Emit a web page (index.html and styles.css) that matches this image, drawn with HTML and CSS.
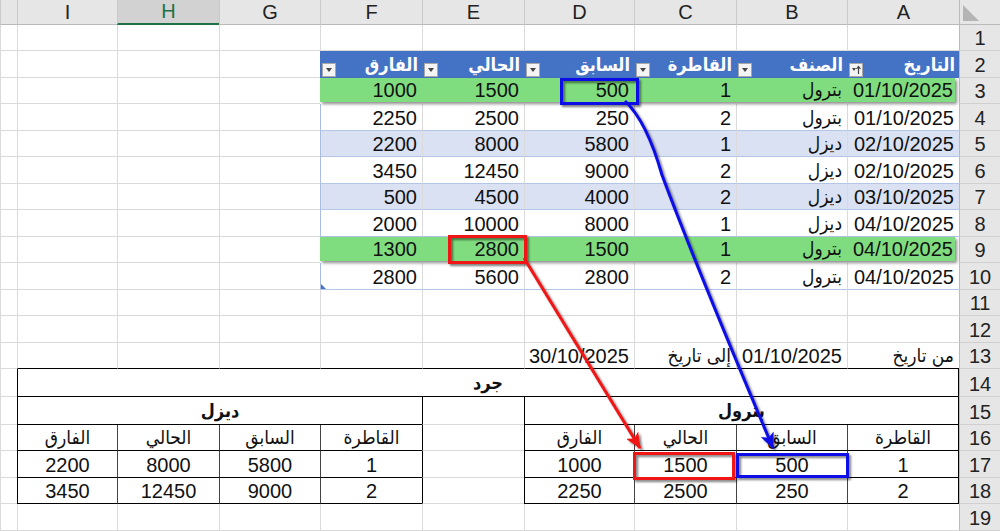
FILE: index.html
```html
<!DOCTYPE html>
<html lang="ar" dir="rtl">
<head>
    <meta charset="UTF-8">
    <title>جرد</title>
    <link rel="stylesheet" href="styles.css">
</head>
<body>
    <div class="sheet">
        <div class="row hdr">
            <div class="corner"><svg width="16" height="16" viewBox="0 0 16 16"><path d="M0 0V16H16Z" fill="#b4b4b4"/></svg></div>
            <div class="ch">A</div><div class="ch">B</div><div class="ch">C</div><div class="ch">D</div><div class="ch">E</div>
            <div class="ch">F</div><div class="ch">G</div><div class="ch sel">H</div><div class="ch">I</div><div class="ch"></div>
        </div>

        <div class="row r1">
            <div class="rh">1</div>
            <div class="c"></div><div class="c"></div><div class="c"></div><div class="c"></div><div class="c"></div>
            <div class="c"></div><div class="c"></div><div class="c"></div><div class="c"></div><div class="c"></div>
        </div>

        <div class="row">
            <div class="rh">2</div>
            <div class="th"><span class="ar">التاريخ</span><span class="fb sort"><svg width="10" height="10" viewBox="0 0 10 10"><path d="M1 3h4L3 6z" fill="#444"/><path d="M7.5 9V2M5.5 4l2-2.5 2 2.5" stroke="#444" stroke-width="1.2" fill="none"/></svg></span></div>
            <div class="th"><span class="ar">الصنف</span><span class="fb"></span></div>
            <div class="th"><span class="ar">القاطرة</span><span class="fb"></span></div>
            <div class="th"><span class="ar">السابق</span><span class="fb"></span></div>
            <div class="th"><span class="ar">الحالي</span><span class="fb"></span></div>
            <div class="th"><span class="ar">الفارق</span><span class="fb"></span></div>
            <div class="c"></div><div class="c"></div><div class="c"></div><div class="c"></div>
        </div>

        <div class="row hl">
            <div class="rh">3</div>
            <div class="band">
                <div class="bc">01/10/2025</div><div class="bc ar">بترول</div><div class="bc">1</div>
                <div class="bc">500</div><div class="bc">1500</div><div class="bc">1000</div>
            </div>
            <div class="c"></div><div class="c"></div><div class="c"></div><div class="c"></div>
        </div>

        <div class="row">
            <div class="rh">4</div>
            <div class="tc">01/10/2025</div><div class="tc ar">بترول</div><div class="tc">2</div>
            <div class="tc">250</div><div class="tc">2500</div><div class="tc edge">2250</div>
            <div class="c"></div><div class="c"></div><div class="c"></div><div class="c"></div>
        </div>

        <div class="row">
            <div class="rh">5</div>
            <div class="tc bd">02/10/2025</div><div class="tc bd ar">ديزل</div><div class="tc bd">1</div>
            <div class="tc bd">5800</div><div class="tc bd">8000</div><div class="tc bd edge">2200</div>
            <div class="c"></div><div class="c"></div><div class="c"></div><div class="c"></div>
        </div>

        <div class="row">
            <div class="rh">6</div>
            <div class="tc">02/10/2025</div><div class="tc ar">ديزل</div><div class="tc">2</div>
            <div class="tc">9000</div><div class="tc">12450</div><div class="tc edge">3450</div>
            <div class="c"></div><div class="c"></div><div class="c"></div><div class="c"></div>
        </div>

        <div class="row">
            <div class="rh">7</div>
            <div class="tc bd">03/10/2025</div><div class="tc bd ar">ديزل</div><div class="tc bd">2</div>
            <div class="tc bd">4000</div><div class="tc bd">4500</div><div class="tc bd edge">500</div>
            <div class="c"></div><div class="c"></div><div class="c"></div><div class="c"></div>
        </div>

        <div class="row">
            <div class="rh">8</div>
            <div class="tc">04/10/2025</div><div class="tc ar">ديزل</div><div class="tc">1</div>
            <div class="tc">8000</div><div class="tc">10000</div><div class="tc edge">2000</div>
            <div class="c"></div><div class="c"></div><div class="c"></div><div class="c"></div>
        </div>

        <div class="row hl">
            <div class="rh">9</div>
            <div class="band">
                <div class="bc">04/10/2025</div><div class="bc ar">بترول</div><div class="bc">1</div>
                <div class="bc">1500</div><div class="bc">2800</div><div class="bc">1300</div>
            </div>
            <div class="c"></div><div class="c"></div><div class="c"></div><div class="c"></div>
        </div>

        <div class="row">
            <div class="rh">10</div>
            <div class="tc">04/10/2025</div><div class="tc ar">بترول</div><div class="tc">2</div>
            <div class="tc">2800</div><div class="tc">5600</div><div class="tc edge">2800</div>
            <div class="c"></div><div class="c"></div><div class="c"></div><div class="c"></div>
        </div>

        <div class="row">
            <div class="rh">11</div>
            <div class="c"></div><div class="c"></div><div class="c"></div><div class="c"></div><div class="c"></div>
            <div class="c"></div><div class="c"></div><div class="c"></div><div class="c"></div><div class="c"></div>
        </div>

        <div class="row">
            <div class="rh">12</div>
            <div class="c"></div><div class="c"></div><div class="c"></div><div class="c"></div><div class="c"></div>
            <div class="c"></div><div class="c"></div><div class="c"></div><div class="c"></div><div class="c"></div>
        </div>

        <div class="row">
            <div class="rh">13</div>
            <div class="c bb ar">من تاريخ</div><div class="c bb">01/10/2025</div><div class="c bb ar">إلى تاريخ</div>
            <div class="c bb">30/10/2025</div><div class="c bb"></div><div class="c bb"></div>
            <div class="c bb"></div><div class="c bb"></div><div class="c bb"></div><div class="c"></div>
        </div>

        <div class="row r14">
            <div class="rh">14</div>
            <div class="box ar">جرد</div>
            <div class="c"></div>
        </div>

        <div class="row r15">
            <div class="rh">15</div>
            <div class="blk r ar">بترول</div>
            <div class="c eb"></div>
            <div class="blk ar">ديزل</div>
            <div class="c"></div>
        </div>

        <div class="row">
            <div class="rh">16</div>
            <div class="t ar right">القاطرة</div><div class="t ar">السابق</div><div class="t ar">الحالي</div><div class="t ar ol">الفارق</div>
            <div class="c eb"></div>
            <div class="t ar">القاطرة</div><div class="t ar">السابق</div><div class="t ar">الحالي</div><div class="t ar ol">الفارق</div>
            <div class="c"></div>
        </div>

        <div class="row">
            <div class="rh">17</div>
            <div class="t right">1</div><div class="t">500</div><div class="t">1500</div><div class="t ol">1000</div>
            <div class="c eb"></div>
            <div class="t">1</div><div class="t">5800</div><div class="t">8000</div><div class="t ol">2200</div>
            <div class="c"></div>
        </div>

        <div class="row">
            <div class="rh">18</div>
            <div class="t right">2</div><div class="t">250</div><div class="t">2500</div><div class="t ol">2250</div>
            <div class="c eb"></div>
            <div class="t">2</div><div class="t">9000</div><div class="t">12450</div><div class="t ol">3450</div>
            <div class="c"></div>
        </div>

        <div class="row">
            <div class="rh">19</div>
            <div class="c"></div><div class="c"></div><div class="c"></div><div class="c"></div><div class="c"></div>
            <div class="c"></div><div class="c"></div><div class="c"></div><div class="c"></div><div class="c"></div>
        </div>
    </div>

    <!-- drawing layer: boxes and arrows sitting over the cells -->
    <svg class="ink" width="1000" height="531" viewBox="0 0 1000 531">
        <defs>
            <filter id="sh" filterUnits="userSpaceOnUse" x="0" y="0" width="1000" height="531">
                <feDropShadow dx="2" dy="2" stdDeviation="1.3" flood-color="#000" flood-opacity="0.5"/>
            </filter>
            <marker id="ab" markerUnits="userSpaceOnUse" markerWidth="16" markerHeight="14" viewBox="0 0 16 14" refX="15" refY="7" orient="auto">
                <path d="M0 0L16 7L0 14L4 7Z" fill="#0b0be8"/>
            </marker>
            <marker id="ar" markerUnits="userSpaceOnUse" markerWidth="16" markerHeight="14" viewBox="0 0 16 14" refX="15" refY="7" orient="auto">
                <path d="M0 0L16 7L0 14L4 7Z" fill="#f01414"/>
            </marker>
        </defs>
        <path d="M321 284V289H326Z" fill="#4472c4"/>
        <g filter="url(#sh)" fill="none" stroke-width="3">
            <rect x="561.5" y="79.5" width="76" height="24" stroke="#0b0be8"/>
            <rect x="449.5" y="236.5" width="76" height="26" stroke="#f01414"/>
            <rect x="634.5" y="453.5" width="99" height="25" stroke="#f01414"/>
            <rect x="737.5" y="454.5" width="110" height="22" stroke="#0b0be8"/>
            <path d="M625 101C640 115 652 140 662 175C690 250 740 370 773 448" stroke="#0b0be8" marker-end="url(#ab)"/>
            <path d="M524 258L640 448" stroke="#f01414" marker-end="url(#ar)"/>
        </g>
    </svg>
</body>
</html>
```

FILE: styles.css
```css
body {
    margin: 0;
    width: 1000px;
    height: 531px;
    overflow: hidden;
    position: relative;
    background-color: #fff;
    font-family: "Liberation Sans", "DejaVu Sans Condensed", "DejaVu Sans", Arial, sans-serif;
    font-size: 20px;
    color: #111;
}

.sheet {
    direction: rtl;
}

.row {
    display: grid;
    grid-template-columns: 41px 112px 111px 102px 110px 102px 102px 101px 102px 100px 1fr;
    height: 26.5px;
}
.row.hdr { height: 25px; }
.row.r1 { height: 26px; }
.row.r14 { height: 27.7px; }
.row.r15 { height: 28.3px; }

.row.hl {
    position: relative;
    z-index: 1;
}

.c, .rh, .ch, .th, .tc, .bc, .t, .box, .blk, .corner {
    box-sizing: border-box;
    display: flex;
    align-items: flex-end;
    white-space: nowrap;
    min-width: 0;
}

/* arabic runs come from a wider fallback font, so set them a bit smaller */
.ar {
    font-size: 19px;
}
.th .ar, .box.ar, .blk.ar {
    font-size: 18px;
}

/* plain cells */
.c {
    padding: 0 5px;
    border-left: 1px solid #dadada;
    border-bottom: 1px solid #dadada;
}
.c.bb { border-bottom-color: #000; }
.c.eb { border-left-color: #000; }

/* headers */
.corner {
    justify-content: flex-end;
    padding: 0 0 3px 3px;
    background-color: #e6e6e6;
    border-left: 1px solid #bababa;
    border-bottom: 1px solid #bababa;
}
.ch {
    justify-content: center;
    background-color: #e6e6e6;
    border-left: 1px solid #cacaca;
    border-bottom: 1px solid #bababa;
    color: #222;
}
.ch.sel {
    background-color: #d2d2d2;
    color: #1e7145;
    border-bottom: 2px solid #1e7145;
}
.rh {
    justify-content: center;
    background-color: #e6e6e6;
    border-left: 1px solid #bababa;
    border-bottom: 1px solid #d0d0d0;
    color: #222;
}

/* excel table */
.th {
    justify-content: space-between;
    padding: 0 4px 1px 2px;
    background-color: #4472c4;
    color: #fff;
    font-weight: bold;
}
.th .ar {
    padding-bottom: 1px;
}
.fb {
    box-sizing: border-box;
    display: flex;
    align-items: center;
    justify-content: center;
    width: 14px;
    height: 14px;
    background-color: #f4f4f4;
    border: 1px solid #a8a8a8;
}
.fb::after {
    content: "";
    border-top: 4px solid #444;
    border-left: 3.5px solid transparent;
    border-right: 3.5px solid transparent;
}
.fb.sort::after { display: none; }

.tc {
    padding: 0 5px;
    border-left: 1px solid #dadada;
    border-bottom: 1px solid #b4c6e7;
}
.tc.bd { background-color: #d9e1f2; }
.tc.edge { border-left-color: #a9bde3; }

.band {
    grid-column: span 6;
    display: grid;
    grid-template-columns: 108px 111px 102px 110px 102px 102px;
    margin: 0 4px 2px 0;
    background-color: #80dd7f;
    box-shadow: 2px 2px 3px rgba(0, 0, 0, 0.45);
}
.bc { padding: 0 5px; }
.bc:first-child { padding-right: 2px; }

.ar.tc, .ar.bc, .ar.c {
    padding-bottom: 1px;
}

/* summary block */
.box {
    grid-column: span 9;
    justify-content: center;
    font-weight: bold;
    border: 1px solid #000;
    border-top: none;
    padding-bottom: 2px;
}
.blk {
    grid-column: span 4;
    justify-content: center;
    font-weight: bold;
    border-left: 1px solid #000;
    border-bottom: 1px solid #000;
    padding-bottom: 2px;
}
.blk.r { border-right: 1px solid #000; }

.t {
    justify-content: center;
    border-left: 1px solid #444;
    border-bottom: 1px solid #000;
}
.t.ar { padding-bottom: 1px; }
.t.ol { border-left-color: #000; }
.t.right { border-right: 1px solid #000; }

.ink {
    position: absolute;
    left: 0;
    top: 0;
    z-index: 2;
    pointer-events: none;
}
```
